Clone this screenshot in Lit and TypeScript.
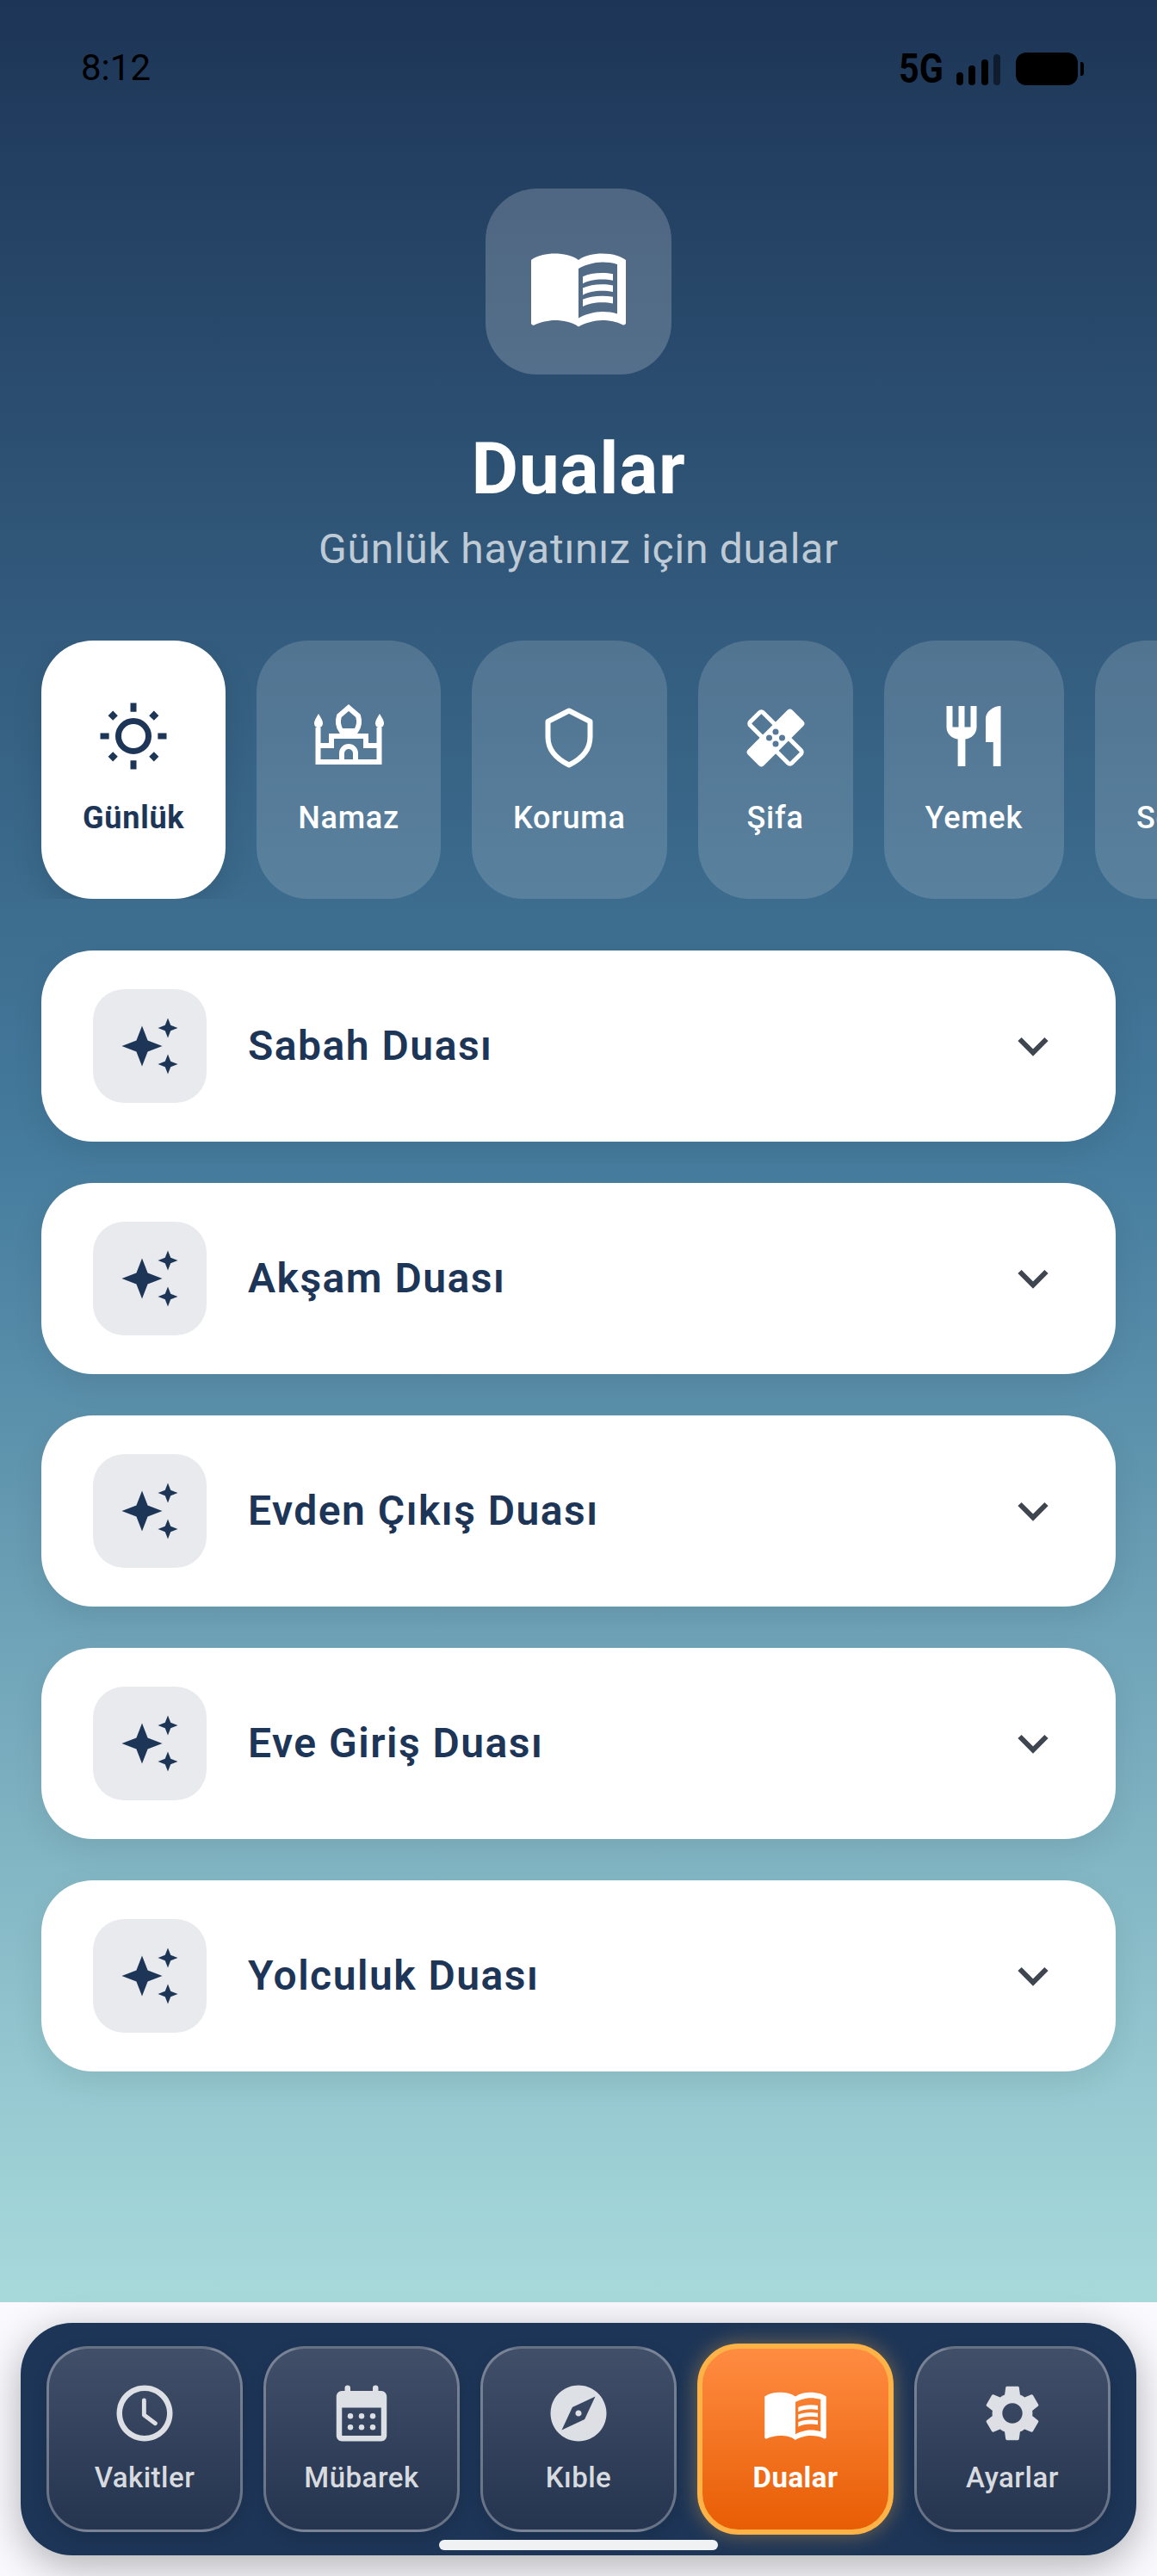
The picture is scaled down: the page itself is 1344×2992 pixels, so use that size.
import { LitElement, html, css, svg } from "lit";
import { customElement } from "lit/decorators.js";

const BOOK = svg`<path d="M21 5c-1.11-.35-2.33-.5-3.5-.5-1.95 0-4.05.4-5.5 1.5-1.45-1.1-3.55-1.5-5.5-1.5S2.45 4.9 1 6v14.65c0 .25.25.5.5.5.1 0 .15-.05.25-.05C3.1 20.45 5.05 20 6.5 20c1.95 0 4.05.4 5.5 1.5 1.35-.85 3.8-1.5 5.5-1.5 1.65 0 3.35.3 4.75 1.05.1.05.15.05.25.05.25 0 .5-.25.5-.5V6c-.6-.45-1.25-.75-2-1zm0 13.5c-1.1-.35-2.3-.5-3.5-.5-1.7 0-4.15.65-5.5 1.5V8c1.35-.85 3.8-1.5 5.5-1.5 1.2 0 2.4.15 3.5.5v11.5z"/><path d="M17.5 10.5c.88 0 1.73.09 2.5.26V9.24c-.79-.15-1.64-.24-2.5-.24-1.7 0-3.24.29-4.5.83v1.66c1.13-.64 2.7-.99 4.5-.99zM13 12.49v1.66c1.13-.64 2.7-.99 4.5-.99.88 0 1.73.09 2.5.26V11.9c-.79-.15-1.64-.24-2.5-.24-1.7 0-3.24.3-4.5.83zm4.5 1.84c-1.7 0-3.24.29-4.5.83v1.66c1.13-.64 2.7-.99 4.5-.99.88 0 1.73.09 2.5.26v-1.52c-.79-.16-1.64-.24-2.5-.24z"/>`;

const star = (cx: number, cy: number, r: number) => {
  const k = r * 0.28;
  return `M${cx} ${cy - r}L${cx + k} ${cy - k}L${cx + r} ${cy}L${cx + k} ${cy + k}L${cx} ${cy + r}L${cx - k} ${cy + k}L${cx - r} ${cy}L${cx - k} ${cy - k}Z`;
};

const ICONS: Record<string, unknown> = {
  sun: html`<svg viewBox="0 0 24 24" class="ic"><circle cx="12" cy="12" r="5" fill="none" stroke="currentColor" stroke-width="2"/><path d="M11 1h2v2.9h-2zM11 20.1h2V23h-2zM1 11h2.9v2H1zM20.1 11H23v2h-2.9z"/><path d="M5.2 3.6l1.6 1.6-1.6 1.6-1.6-1.6zM18.8 3.6l1.6 1.6-1.6 1.6-1.6-1.6zM5.2 17.2l1.6 1.6-1.6 1.6-1.6-1.6zM18.8 17.2l1.6 1.6-1.6 1.6-1.6-1.6z"/></svg>`,
  mosque: html`<svg viewBox="363 813 84 84" class="ic"><g fill="none" stroke="currentColor" stroke-width="6"><path d="M369.5 845V885H440.5V845"/><path d="M369.5 866H385V855H425V866H440.5"/><path d="M397 885V875a8 8 0 0 1 16 0V885"/><path d="M405 822L416 831.5C418 838 418 843 413.5 849H396.5C392 843 392 838 394 831.5Z"/></g><path d="M370 829c-3 5-5 8-5 11c0 3 2 5 5 5c3 0 5-2 5-5c0-3-2-6-5-11zM441 829c-3 5-5 8-5 11c0 3 2 5 5 5c3 0 5-2 5-5c0-3-2-6-5-11z"/></svg>`,
  shield: html`<svg viewBox="619.5 813 84 84" class="ic"><path d="M661.5 825.5L686 838V856C686 870 677 881 661.5 888.5C646 881 637 870 637 856V838Z" fill="none" stroke="currentColor" stroke-width="6" stroke-linejoin="round"/></svg>`,
  heal: html`<svg viewBox="858 813 84 84" class="ic"><g transform="rotate(-45 900 857)"><rect x="889.5" y="823" width="21" height="68" rx="3" fill="none" stroke="currentColor" stroke-width="5"/><rect x="863.5" y="844" width="73" height="26" rx="4"/></g><g fill="#56799a"><circle cx="900" cy="850" r="3.5"/><circle cx="892.5" cy="857" r="3.5"/><circle cx="907.5" cy="857" r="3.5"/><circle cx="900" cy="864" r="3.5"/></g></svg>`,
  food: html`<svg viewBox="0 0 24 24" class="ic"><path d="M11 9H9V2H7v7H5V2H3v7c0 2.12 1.66 3.84 3.75 3.97V22h2.5v-9.03C11.34 12.84 13 11.12 13 9V2h-2v7zm5-3v8h2.5v8H21V2c-2.76 0-5 2.24-5 4z"/></svg>`,
  travel: html`<svg viewBox="0 0 24 24" class="ic"><path d="M9 2h6v4h4v16H5V6h4zM11 4v2h2V4z"/></svg>`,
};

const NAV_ICONS: Record<string, unknown> = {
  clock: svg`<path d="M11.99 2C6.47 2 2 6.48 2 12s4.47 10 9.99 10C17.52 22 22 17.52 22 12S17.52 2 11.99 2zM12 20c-4.42 0-8-3.58-8-8s3.58-8 8-8 8 3.58 8 8-3.58 8-8 8z"/><path d="M11.8 7.4v5.2l4 3" fill="none" stroke="currentColor" stroke-width="1.5" stroke-linecap="round" stroke-linejoin="round"/>`,
  cal: svg`<path fill-rule="evenodd" d="M19 4h-1V3a1 1 0 0 0-2 0v1H8V3a1 1 0 0 0-2 0v1H5c-1.1 0-2 .9-2 2v14c0 1.1.9 2 2 2h14c1.1 0 2-.9 2-2V6c0-1.1-.9-2-2-2zm0 16H5V10h14v10z"/><circle cx="8" cy="13" r="1"/><circle cx="12" cy="13" r="1"/><circle cx="16" cy="13" r="1"/><circle cx="8" cy="17" r="1"/><circle cx="12" cy="17" r="1"/><circle cx="16" cy="17" r="1"/>`,
  compass: svg`<path fill-rule="evenodd" d="M12 10.9c-.61 0-1.1.49-1.1 1.1s.49 1.1 1.1 1.1c.61 0 1.1-.49 1.1-1.1s-.49-1.1-1.1-1.1zM12 2C6.48 2 2 6.48 2 12s4.48 10 10 10 10-4.48 10-10S17.52 2 12 2zm2.19 12.19L6 18l3.81-8.19L18 6l-3.81 8.19z"/>`,
  book: BOOK,
  gear: svg`<path d="M19.14 12.94c.04-.3.06-.61.06-.94 0-.32-.02-.64-.07-.94l2.03-1.58c.18-.14.23-.41.12-.61l-1.92-3.32c-.12-.22-.37-.29-.59-.22l-2.39.96c-.5-.38-1.03-.7-1.62-.94l-.36-2.54c-.04-.24-.24-.41-.48-.41h-3.84c-.24 0-.43.17-.47.41l-.36 2.54c-.59.24-1.13.57-1.62.94l-2.39-.96c-.22-.08-.47 0-.59.22L2.74 8.87c-.12.21-.08.47.12.61l2.03 1.58c-.05.3-.09.63-.09.94s.02.64.07.94l-2.03 1.58c-.18.14-.23.41-.12.61l1.92 3.32c.12.22.37.29.59.22l2.39-.96c.5.38 1.03.7 1.62.94l.36 2.54c.05.24.24.41.48.41h3.84c.24 0 .44-.17.47-.41l.36-2.54c.59-.24 1.13-.56 1.62-.94l2.39.96c.22.08.47 0 .59-.22l1.92-3.32c.12-.22.07-.47-.12-.61l-2.01-1.58zM12 15.6c-1.98 0-3.6-1.62-3.6-3.6s1.62-3.6 3.6-3.6 3.6 1.62 3.6 3.6-1.62 3.6-3.6 3.6z"/>`,
};

const CHIPS = [
  { label: "Günlük", icon: "sun", active: true },
  { label: "Namaz", icon: "mosque" },
  { label: "Koruma", icon: "shield" },
  { label: "Şifa", icon: "heal" },
  { label: "Yemek", icon: "food" },
  { label: "Seyahat", icon: "travel" },
];
const DUAS = ["Sabah Duası", "Akşam Duası", "Evden Çıkış Duası", "Eve Giriş Duası", "Yolculuk Duası"];
const NAV = [
  { label: "Vakitler", icon: "clock" },
  { label: "Mübarek", icon: "cal" },
  { label: "Kıble", icon: "compass" },
  { label: "Dualar", icon: "book", active: true },
  { label: "Ayarlar", icon: "gear" },
];

@customElement("app-root")
export class AppRoot extends LitElement {
  static styles = css`
    :host { display: block; width: 1344px; height: 2992px; font-family: Roboto, sans-serif; background: #fafafe; overflow: hidden; }
    .screen { height: 2674px; background: linear-gradient(180deg, #1d3557 0%, #457b9d 50%, #a8dadc 100%); display: flex; flex-direction: column; }
    .status { height: 80px; margin-top: 40px; padding: 0 85px 0 94px; display: flex; align-items: center; justify-content: space-between; color: #000; }
    .time { font-size: 42px; font-weight: 400; margin-bottom: 3px; }
    .sys { display: flex; align-items: center; gap: 16px; }
    .net { width: 51px; font-size: 48px; font-weight: 700; white-space: nowrap; transform: scaleX(.86); transform-origin: left center; margin-bottom: 1px; }
    .sys svg { display: block; }
    .hero { align-self: center; margin-top: 99px; width: 216px; height: 216px; border-radius: 60px; background: rgba(255,255,255,.2); display: flex; align-items: center; justify-content: center; }
    .hero svg { width: 120px; height: 120px; fill: #fff; margin-top: 10px; }
    h1 { margin: 60px 0 0; font-size: 84px; line-height: 100px; font-weight: 700; color: #fff; text-align: center; letter-spacing: .75px; }
    .sub { margin: 15px 0 0; font-size: 48px; line-height: 56px; color: rgba(255,255,255,.7); text-align: center; letter-spacing: .75px; }
    .chips { margin-top: 78px; padding-left: 48px; display: flex; gap: 36px; overflow: hidden; }
    .chip { flex: none; box-sizing: border-box; height: 300px; min-width: 180px; padding: 69px 48px 0; border-radius: 60px; background: rgba(255,255,255,.15); color: #fff; display: flex; flex-direction: column; align-items: center; gap: 32px; font-size: 36px; font-weight: 500; letter-spacing: .75px; }
    .chip.on { background: #fff; color: #1d3557; font-weight: 700; box-shadow: 0 12px 36px rgba(0,0,0,.12); }
    .ic { width: 84px; height: 84px; fill: currentColor; display: block; }
    .list { margin: 60px 48px 0; display: flex; flex-direction: column; gap: 48px; }
    .card { height: 222px; box-sizing: border-box; padding: 0 60px; border-radius: 60px; background: #fff; display: flex; align-items: center; box-shadow: 0 12px 36px rgba(0,0,0,.08); }
    .badge { width: 132px; height: 132px; border-radius: 36px; background: #e9eaee; flex: none; }
    .badge svg { display: block; width: 132px; height: 132px; fill: #1d3557; }
    .name { margin: 0 0 2px 48px; flex: 1; font-size: 48px; font-weight: 600; color: #1d3557; letter-spacing: 1.5px; }
    .chev { width: 48px; height: 48px; margin-right: 12px; fill: none; stroke: #3f4650; stroke-width: 6; }
    .foot { height: 318px; box-sizing: border-box; padding: 24px 24px 0; }
    .nav { position: relative; height: 270px; box-sizing: border-box; padding: 0 30px; border-radius: 60px; background: #1d3557; box-shadow: 0 12px 48px rgba(0,0,0,.3); display: flex; align-items: center; gap: 24px; }
    .item { flex: none; box-sizing: border-box; width: 228px; height: 216px; border: 3px solid rgba(255,255,255,.3); border-radius: 48px; background: linear-gradient(180deg, #414f69, #25344f); color: rgba(255,255,255,.83); display: flex; flex-direction: column; align-items: center; padding-top: 35.5px; gap: 16px; font-size: 33px; font-weight: 500; letter-spacing: .5px; box-shadow: 0 6px 18px rgba(0,0,0,.12); }
    .item svg { width: 78px; height: 78px; fill: currentColor; display: block; }
    .item.on { height: 222px; border: 6px solid #ffb347; background: linear-gradient(180deg, #ff8c42, #e85d04); color: #fff; font-weight: 700; box-shadow: 0 0 24px rgba(255,179,71,.4); }
    .home { position: absolute; left: 486px; top: 252px; width: 324px; height: 12px; border-radius: 6px; background: #eff1f3; }
  `;

  render() {
    return html`
      <div class="screen">
        <div class="status">
          <span class="time">8:12</span>
          <div class="sys">
            <span class="net">5G</span>
            <svg width="148" height="38" viewBox="0 0 148 38">
              <rect x="0" y="23" width="8" height="15" rx="4" fill="#000"/>
              <rect x="14" y="15" width="8" height="23" rx="4" fill="#000"/>
              <rect x="29" y="8" width="8" height="30" rx="4" fill="#000"/>
              <rect x="43" y="2" width="8" height="36" rx="4" fill="#000" fill-opacity=".5"/>
              <rect x="69" y="0" width="72" height="38" rx="12" fill="#000"/>
              <path d="M144 11h1a3 3 0 0 1 3 3v10a3 3 0 0 1-3 3h-1z" fill="#000"/>
            </svg>
          </div>
        </div>
        <div class="hero"><svg viewBox="0 0 24 24">${BOOK}</svg></div>
        <h1>Dualar</h1>
        <p class="sub">Günlük hayatınız için dualar</p>
        <div class="chips">
          ${CHIPS.map((c) => html`<div class="chip ${c.active ? "on" : ""}">${ICONS[c.icon]}<span>${c.label}</span></div>`)}
        </div>
        <div class="list">
          ${DUAS.map((d) => html`<div class="card">
            <div class="badge"><svg viewBox="0 0 132 132"><path d="${star(57, 66, 23.5)}"/><path d="${star(87, 45, 11.5)}"/><path d="${star(87, 87, 11.5)}"/></svg></div>
            <span class="name">${d}</span>
            <svg class="chev" viewBox="0 0 48 48"><path d="M8.5 16L24 31.5 39.5 16"/></svg>
          </div>`)}
        </div>
      </div>
      <div class="foot">
        <div class="nav">
          ${NAV.map((n) => html`<div class="item ${n.active ? "on" : ""}"><svg viewBox="0 0 24 24">${NAV_ICONS[n.icon]}</svg><span>${n.label}</span></div>`)}
          <div class="home"></div>
        </div>
      </div>
    `;
  }
}
